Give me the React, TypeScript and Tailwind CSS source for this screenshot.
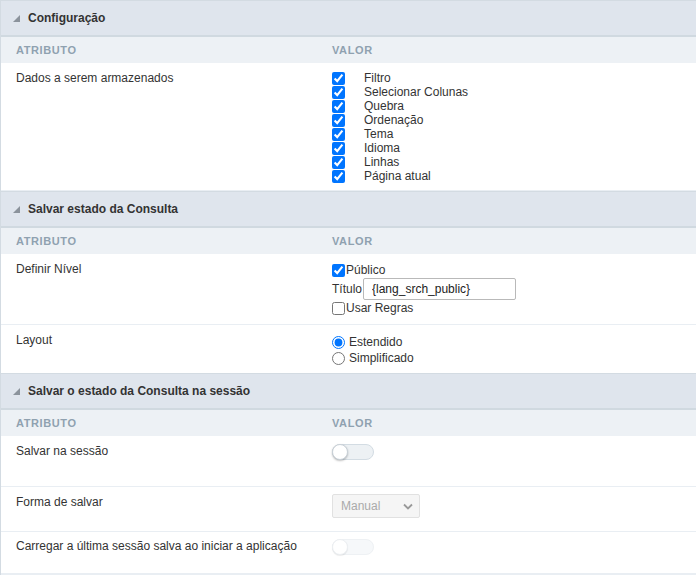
import React from 'react';

const font = { fontFamily: '"Liberation Sans", Arial, sans-serif' };

const Triangle = () => (
  <svg width="7" height="7" viewBox="0 0 7 7" className="shrink-0">
    <polygon points="7,0 7,7 0,7" fill="#8b939c" />
  </svg>
);

const SectionHeader = ({ title }: { title: string }) => (
  <div className="flex items-center gap-[8px] h-[37px] pl-[12px] bg-[#dfe5ed] border-t border-t-[#d3dbe2] border-b-2 border-b-[#d0d9e0]">
    <Triangle />
    <span className="text-[12px] font-bold text-[#333]">{title}</span>
  </div>
);

const ColHeader = () => (
  <div className="flex h-[26px] items-center bg-[#edf1f5] text-[11px] font-bold tracking-[0.6px] text-[#8fa1b0]">
    <div className="w-[316px] pl-[15px]">ATRIBUTO</div>
    <div className="pl-[15px]">VALOR</div>
  </div>
);

const Row = ({ label, children, className = '', labelPad = 'pt-[8px]' }: { label: string; children?: React.ReactNode; className?: string; labelPad?: string }) => (
  <div className={`flex border-b border-[#e9eef3] text-[12px] text-[#333] ${className}`}>
    <div className={`w-[316px] pl-[15px] leading-[14px] ${labelPad}`}>{label}</div>
    <div className="pl-[15px] flex-1">{children}</div>
  </div>
);

const Toggle = ({ faded = false }: { faded?: boolean }) => (
  <div className={`relative w-[42px] h-[16px] rounded-full border ${faded ? 'bg-[#f6f8fa] border-[#eef1f4]' : 'bg-[#edf1f4] border-[#d3dce3]'}`}>
    <div className={`absolute -left-[1px] -top-[1px] w-[16px] h-[16px] rounded-full bg-white border ${faded ? 'border-[#eceff2] shadow-[0_1px_1px_rgba(0,0,0,0.08)]' : 'border-[#c9d1d8] shadow-[0_1px_2px_rgba(0,0,0,0.25)]'}`} />
  </div>
);

const dados = ['Filtro', 'Selecionar Colunas', 'Quebra', 'Ordenação', 'Tema', 'Idioma', 'Linhas', 'Página atual'];

export default function App() {
  return (
    <div style={font} className="w-[696px] h-[575px] bg-white border-l border-[#d3dbe2] overflow-hidden">
      <SectionHeader title="Configuração" />
      <ColHeader />
      <Row label="Dados a serem armazenados" className="h-[128px]">
        <div className="pt-[8px] flex flex-col">
          {dados.map((d) => (
            <label key={d} className="flex items-center h-[14px] leading-[14px]">
              <input type="checkbox" defaultChecked className="m-0 w-[13px] h-[13px] accent-[#0075ff]" />
              <span className="ml-[19px]">{d}</span>
            </label>
          ))}
        </div>
      </Row>

      <SectionHeader title="Salvar estado da Consulta" />
      <ColHeader />
      <Row label="Definir Nível" className="h-[71px]">
        <div className="pt-[9px] flex flex-col">
          <label className="flex items-center h-[14px]">
            <input type="checkbox" defaultChecked className="m-0 w-[13px] h-[13px] accent-[#0075ff]" />
            <span className="ml-[1px]">Público</span>
          </label>
          <div className="flex items-center h-[23px]">
            <span>Título</span>
            <input
              type="text"
              defaultValue="{lang_srch_public}"
              className="ml-[1px] w-[153px] h-[22px] border border-[#b9b9b9] rounded-[2px] pl-[8px] pr-[4px] text-[12px] text-[#222] outline-none"
              style={font}
            />
          </div>
          <label className="flex items-center h-[16px]">
            <input type="checkbox" className="m-0 w-[13px] h-[13px]" />
            <span className="ml-[1px]">Usar Regras</span>
          </label>
        </div>
      </Row>
      <Row label="Layout" className="h-[48px] border-b-0">
        <div className="pt-[9px] flex flex-col">
          <label className="flex items-center h-[16px]">
            <input type="radio" name="layout" defaultChecked className="m-0 w-[13px] h-[13px] accent-[#0075ff]" />
            <span className="ml-[4px]">Estendido</span>
          </label>
          <label className="flex items-center h-[16px]">
            <input type="radio" name="layout" className="m-0 w-[13px] h-[13px]" />
            <span className="ml-[4px]">Simplificado</span>
          </label>
        </div>
      </Row>

      <SectionHeader title="Salvar o estado da Consulta na sessão" />
      <ColHeader />
      <Row label="Salvar na sessão" className="h-[51px]">
        <div className="pt-[8px]">
          <Toggle />
        </div>
      </Row>
      <Row label="Forma de salvar" className="h-[45px]">
        <div className="pt-[7px]">
          <div className="flex items-center justify-between w-[88px] h-[24px] bg-[#f5f5f5] border border-[#e1e1e1] rounded-[2px] pl-[8px] pr-[6px] text-[12px] text-[#aaa]">
            <span>Manual</span>
            <svg width="10" height="7" viewBox="0 0 10 7">
              <polyline points="1,1.5 5,5.5 9,1.5" fill="none" stroke="#999" strokeWidth="1.8" />
            </svg>
          </div>
        </div>
      </Row>
      <Row label="Carregar a última sessão salva ao iniciar a aplicação" labelPad="pt-[7px]" className="h-[43px] border-b-2 border-[#d3dbe2]">
        <div className="pt-[7px]">
          <Toggle faded />
        </div>
      </Row>
    </div>
  );
}
